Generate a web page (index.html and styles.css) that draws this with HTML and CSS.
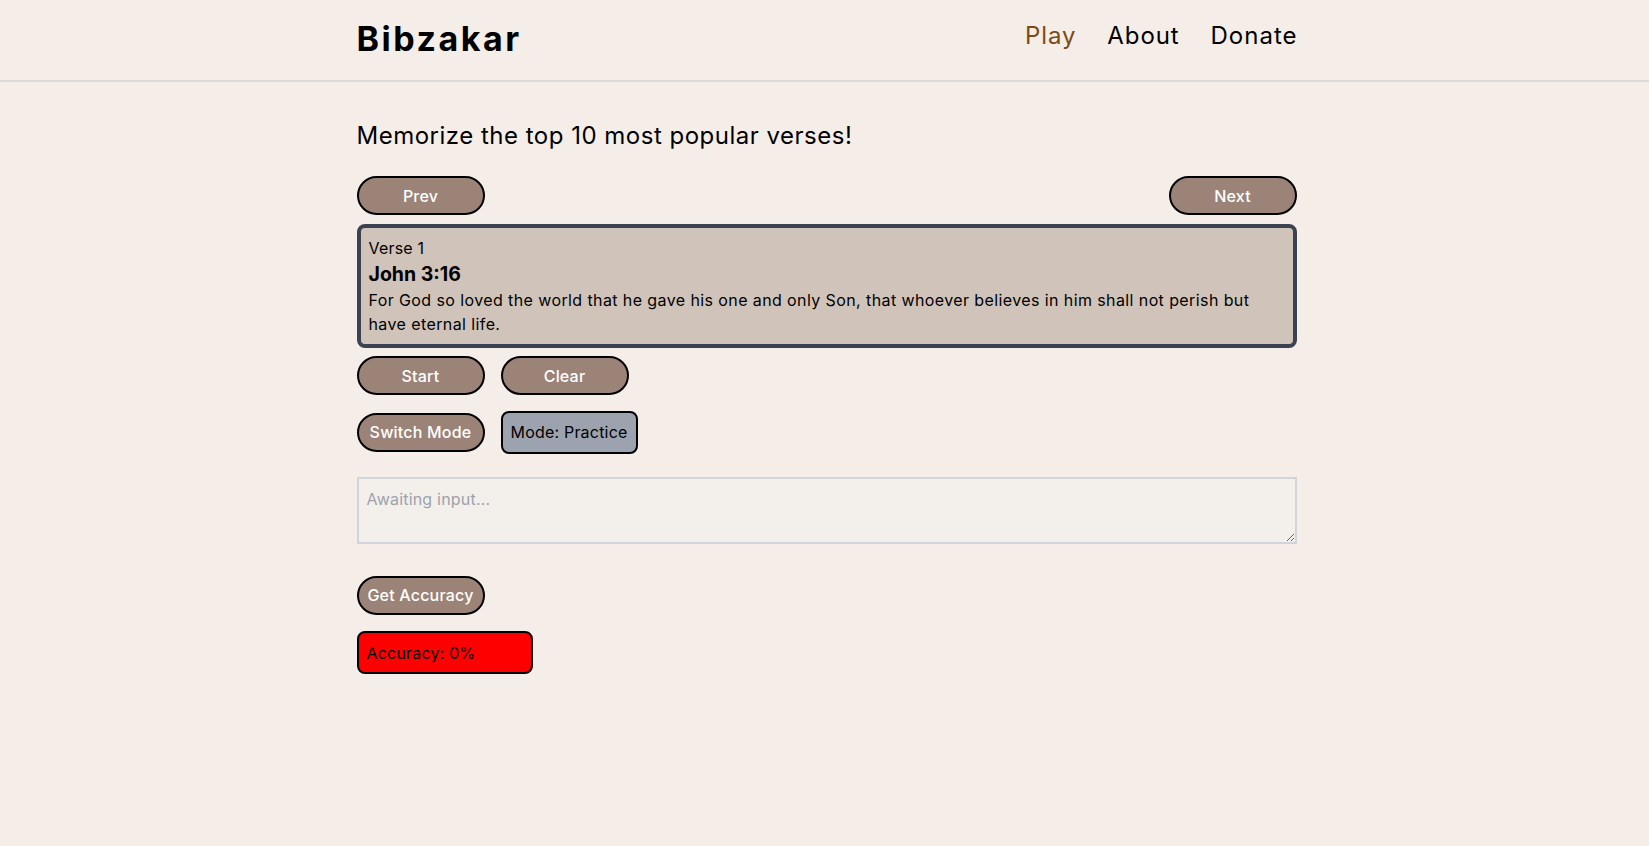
FILE: index.html
```html
<!DOCTYPE html>
<html lang="en">
<head>
<meta charset="utf-8">
<title>Bibzakar</title>
<link rel="stylesheet" href="styles.css">
</head>
<body>
<header class="site-header">
  <div class="container header-inner">
    <div class="logo">Bibzakar</div>
    <nav class="nav">
      <a class="nav-link active" href="#">Play</a>
      <a class="nav-link" href="#">About</a>
      <a class="nav-link" href="#">Donate</a>
    </nav>
  </div>
</header>
<main class="container main">
  <h1 class="title">Memorize the top 10 most popular verses!</h1>
  <div class="row row-split">
    <button class="btn">Prev</button>
    <button class="btn">Next</button>
  </div>
  <section class="verse-card">
    <div class="verse-num">Verse 1</div>
    <div class="verse-ref">John 3:16</div>
    <p class="verse-text">For God so loved the world that he gave his one and only Son, that whoever believes in him shall not perish but have eternal life.</p>
  </section>
  <div class="row row-actions">
    <button class="btn">Start</button>
    <button class="btn">Clear</button>
  </div>
  <div class="row row-mode">
    <button class="btn">Switch Mode</button>
    <div class="mode-box">Mode: Practice</div>
  </div>
  <textarea class="answer" placeholder="Awaiting input..."></textarea>
  <div class="row row-accuracy">
    <button class="btn">Get Accuracy</button>
  </div>
  <div class="accuracy-box">Accuracy: 0%</div>
</main>
</body>
</html>
```
FILE: styles.css
```css
* { box-sizing: border-box; }

html, body {
  margin: 0;
  padding: 0;
  background: #f5eee8;
  color: #000;
  font-family: Inter, "Open Sans", "Noto Sans", sans-serif;
}

.container {
  width: 940px;
  margin-left: calc(50% - 468px);
}

.site-header {
  border-bottom: 2px solid #dddad7;
}

.header-inner {
  display: flex;
  justify-content: space-between;
  align-items: flex-start;
  padding: 19px 0 21px;
}

.logo {
  font-size: 34px;
  line-height: 40px;
  font-weight: 700;
  letter-spacing: 2.5px;
}

.nav {
  display: flex;
  gap: 31px;
  padding-top: 1px;
}

.nav-link {
  font-size: 24px;
  line-height: 32px;
  letter-spacing: 0.9px;
  color: #000;
  text-decoration: none;
}

.nav-link:last-child {
  letter-spacing: 1px;
  margin-right: -1px;
}

.nav-link.active {
  color: #7c4a16;
}

.main {
  padding-top: 38px;
}

.title {
  margin: 0 0 24px;
  font-size: 24px;
  line-height: 32px;
  font-weight: 400;
  letter-spacing: 0.5px;
}

.row {
  display: flex;
  align-items: center;
  gap: 16px;
}

.row-split {
  justify-content: space-between;
}

.btn {
  width: 128px;
  padding: 5.5px 0;
  border: 2px solid #000;
  border-radius: 9999px;
  background: #9b8377;
  color: #fff;
  font-family: inherit;
  font-size: 16px;
  line-height: 24px;
  font-weight: 500;
  letter-spacing: 0.2px;
  text-align: center;
  white-space: nowrap;
  cursor: pointer;
}

.verse-card {
  margin-top: 9px;
  padding: 8px;
  border: 4px solid #3b4252;
  border-radius: 8px;
  background: #d0c4ba;
}

.verse-num {
  font-size: 16px;
  line-height: 24px;
  letter-spacing: 0.2px;
}

.verse-ref {
  font-size: 19.5px;
  line-height: 28px;
  font-weight: 700;
}

.verse-text {
  margin: 0;
  font-size: 16px;
  line-height: 24px;
  letter-spacing: 0.4px;
}

.row-actions {
  margin-top: 8px;
}

.row-mode {
  margin-top: 15.5px;
}

.mode-box {
  padding: 7.5px 8px;
  border: 2px solid #000;
  border-radius: 8px;
  background: #9ca3af;
  font-size: 16px;
  line-height: 24px;
  letter-spacing: 0.2px;
}

.answer {
  display: block;
  width: 100%;
  height: 67px;
  margin-top: 23px;
  padding: 8px;
  border: 2px solid #d1d5db;
  border-radius: 0;
  background: #f3efea;
  font-family: inherit;
  font-size: 16px;
  line-height: 24px;
  color: #000;
  outline: none;
}

.answer::placeholder {
  color: #9ca3af;
  letter-spacing: 0.2px;
}

.row-accuracy {
  margin-top: 32px;
}

.accuracy-box {
  width: 176px;
  margin-top: 16.5px;
  padding: 7.5px 8px;
  border: 2px solid #000;
  border-radius: 8px;
  background: #ff0000;
  font-size: 16px;
  line-height: 24px;
  letter-spacing: 0.2px;
}
```
